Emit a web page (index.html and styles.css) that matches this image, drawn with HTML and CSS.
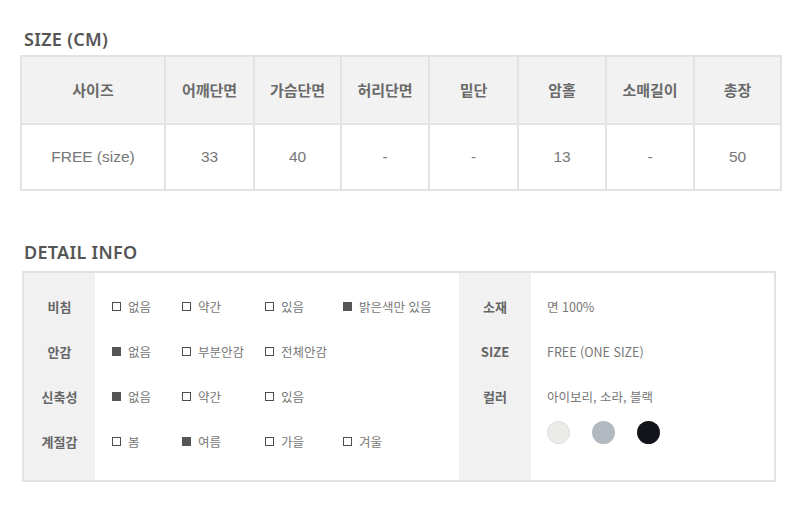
FILE: index.html
```html
<!DOCTYPE html>
<html lang="ko">
<head>
<meta charset="utf-8">
<link rel="stylesheet" href="styles.css">
</head>
<body>
<div class="page">
  <h2 class="title title-size">SIZE (CM)</h2>
  <table class="size-table">
    <colgroup>
      <col class="c0"><col class="c1"><col class="c2"><col class="c3"><col class="c4"><col class="c5"><col class="c6"><col class="c7">
    </colgroup>
    <thead>
      <tr><th>사이즈</th><th>어깨단면</th><th>가슴단면</th><th>허리단면</th><th>밑단</th><th>암홀</th><th>소매길이</th><th>총장</th></tr>
    </thead>
    <tbody>
      <tr><td>FREE (size)</td><td>33</td><td>40</td><td>-</td><td>-</td><td>13</td><td>-</td><td>50</td></tr>
    </tbody>
  </table>

  <h2 class="title title-detail">DETAIL INFO</h2>
  <div class="detail">
    <div class="half left">
      <div class="labels">
        <div class="lab">비침</div>
        <div class="lab">안감</div>
        <div class="lab">신축성</div>
        <div class="lab">계절감</div>
      </div>
      <div class="opts">
        <div class="orow"><span class="opt"><i class="box"></i>없음</span><span class="opt"><i class="box"></i>약간</span><span class="opt"><i class="box"></i>있음</span><span class="opt"><i class="box on"></i>밝은색만 있음</span></div>
        <div class="orow"><span class="opt"><i class="box on"></i>없음</span><span class="opt"><i class="box"></i>부분안감</span><span class="opt"><i class="box"></i>전체안감</span></div>
        <div class="orow"><span class="opt"><i class="box on"></i>없음</span><span class="opt"><i class="box"></i>약간</span><span class="opt"><i class="box"></i>있음</span></div>
        <div class="orow"><span class="opt"><i class="box"></i>봄</span><span class="opt"><i class="box on"></i>여름</span><span class="opt"><i class="box"></i>가을</span><span class="opt"><i class="box"></i>겨울</span></div>
      </div>
    </div>
    <div class="half right">
      <div class="labels">
        <div class="lab">소재</div>
        <div class="lab">SIZE</div>
        <div class="lab">컬러</div>
      </div>
      <div class="vals">
        <div class="val">면 100%</div>
        <div class="val">FREE (ONE SIZE)</div>
        <div class="val">아이보리, 소라, 블랙</div>
        <div class="swatches"><span class="sw ivory"></span><span class="sw sky"></span><span class="sw black"></span></div>
      </div>
    </div>
  </div>
</div>
</body>
</html>
```
FILE: styles.css
```css
* { box-sizing: border-box; }
html, body { margin: 0; padding: 0; background: #fff; }
body {
  font-family: "Noto Sans CJK KR", "Noto Sans", sans-serif;
  color: #666;
  width: 800px;
  height: 530px;
  overflow: hidden;
}
.page { padding: 0 20px 0 20px; }
.title {
  margin: 0;
  font-family: "Noto Sans", "Noto Sans CJK KR", sans-serif;
  font-size: 18px;
  font-weight: 600;
  letter-spacing: 0.3px;
  color: #555;
  line-height: 20px;
  padding-left: 4px;
}
.title-size { padding-top: 29px; height: 55px; }
.title-detail { margin-top: 51px; height: 29px; padding-top: 0; }

.size-table {
  border-collapse: collapse;
  width: 760px;
  table-layout: fixed;
  border: 2px solid #e3e3e3;
}
.c0 { width: 144px; }
.c1 { width: 89px; }
.c2 { width: 87px; }
.c3 { width: 88px; }
.c4 { width: 89px; }
.c5 { width: 88px; }
.c6 { width: 88px; }
.c7 { width: 87px; }
.size-table th, .size-table td {
  border: 2px solid #e3e3e3;
  text-align: center;
  padding: 0;
}
.size-table th {
  background: #f2f2f2;
  height: 68px;
  font-size: 15px;
  font-weight: 700;
  color: #6a6a6a;
  padding-bottom: 2px;
}
.size-table td {
  height: 66px;
  font-family: "Liberation Sans", "Noto Sans CJK KR", sans-serif;
  font-size: 15.5px;
  color: #777;
}

.detail {
  margin-left: 2px;
  width: 754px;
  height: 211px;
  border: 2px solid #e2e2e2;
  display: flex;
}
.half { display: flex; }
.left { width: 435px; }
.right { flex: 1; }
.labels {
  width: 71px;
  background: #f1f1f1;
  padding-top: 11px;
  display: flex;
  flex-direction: column;
}
.right .labels { width: 72px; }
.lab {
  height: 45px;
  line-height: 45px;
  text-align: center;
  font-size: 13px;
  font-weight: 700;
  color: #666;
}
.opts { padding: 11px 0 0 17px; flex: 1; }
.orow {
  height: 45px;
  display: grid;
  grid-template-columns: 70px 83px 78px auto;
  align-items: center;
}
.opt {
  display: flex;
  align-items: center;
  font-size: 12.5px;
  color: #777;
  white-space: nowrap;
}
.box {
  display: inline-block;
  width: 9px;
  height: 9px;
  border: 1.5px solid #4d4d4d;
  margin-right: 7px;
}
.box.on { background: #555; border-color: #555; }
.vals { padding: 11px 0 0 16px; flex: 1; }
.val {
  height: 45px;
  line-height: 45px;
  font-size: 12.5px;
  color: #777;
}
.swatches { display: flex; gap: 22px; margin-top: 2px; }
.sw {
  width: 23px;
  height: 23px;
  border-radius: 50%;
  display: inline-block;
}
.ivory { background: #ebebe8; border: 1px solid #dcdcdc; }
.sky { background: #b2b9c0; }
.black { background: #111418; }
```
